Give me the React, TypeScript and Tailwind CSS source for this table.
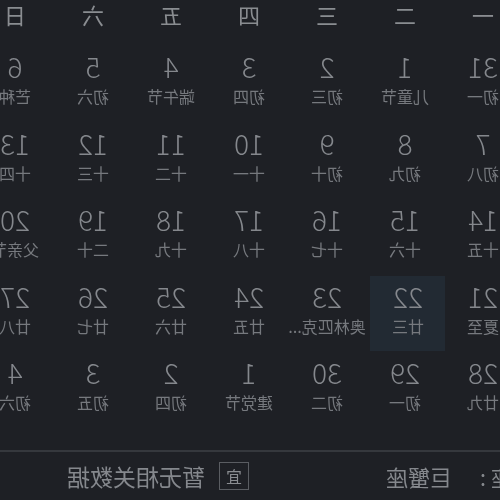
const weekdays = ["一", "二", "三", "四", "五", "六", "日"];

type Day = { n: number; sub: string; active?: boolean };

const weeks: Day[][] = [
  [
    { n: 31, sub: "初一" },
    { n: 1, sub: "儿童节" },
    { n: 2, sub: "初三" },
    { n: 3, sub: "初四" },
    { n: 4, sub: "端午节" },
    { n: 5, sub: "初六" },
    { n: 6, sub: "芒种" },
  ],
  [
    { n: 7, sub: "初八" },
    { n: 8, sub: "初九" },
    { n: 9, sub: "初十" },
    { n: 10, sub: "十一" },
    { n: 11, sub: "十二" },
    { n: 12, sub: "十三" },
    { n: 13, sub: "十四" },
  ],
  [
    { n: 14, sub: "十五" },
    { n: 15, sub: "十六" },
    { n: 16, sub: "十七" },
    { n: 17, sub: "十八" },
    { n: 18, sub: "十九" },
    { n: 19, sub: "二十" },
    { n: 20, sub: "父亲节" },
  ],
  [
    { n: 21, sub: "夏至" },
    { n: 22, sub: "廿三", active: true },
    { n: 23, sub: "奥林匹克日" },
    { n: 24, sub: "廿五" },
    { n: 25, sub: "廿六" },
    { n: 26, sub: "廿七" },
    { n: 27, sub: "廿八" },
  ],
  [
    { n: 28, sub: "廿九" },
    { n: 29, sub: "初一" },
    { n: 30, sub: "初二" },
    { n: 1, sub: "建党节" },
    { n: 2, sub: "初四" },
    { n: 3, sub: "初五" },
    { n: 4, sub: "初六" },
  ],
];

export default function App() {
  return (
    <div
      className="w-[500px] h-[500px] overflow-hidden bg-[#1e2025] text-[#878a8f]"
      style={{ fontFamily: '"Noto Sans CJK SC", "Noto Sans", sans-serif' }}
    >
      {/* whole view is mirrored left-right, as in the capture */}
      <div className="w-[500px] h-[500px] -scale-x-100 flex flex-col">
        <div className="-ml-[22px] w-[546px]">
          {/* weekday header */}
          <div className="grid grid-cols-7 h-[28px] items-center">
            {weekdays.map((w) => (
              <div key={w} className="text-center text-[22px] leading-[28px] text-[#8a8d91]">
                {w}
              </div>
            ))}
          </div>

          {/* days */}
          <div className="mt-[18px] flex flex-col">
            {weeks.map((week, i) => (
              <div key={i} className="grid grid-cols-7 h-[76.5px]">
                {week.map((d, j) => (
                  <div key={j} className="flex justify-center">
                    <div
                      className={`w-[75px] h-[75px] flex flex-col items-center ${
                        d.active ? "bg-[#222a33] translate-x-[-3px]" : ""
                      }`}
                    >
                      <div className="pt-[2px] h-[38px] text-[28px] leading-[36px] font-light text-[#85888d]">
                        {d.n}
                      </div>
                      <div className="h-[24px] max-w-[80px] text-[16px] leading-[24px] text-[#76797e] whitespace-nowrap">
                        {d.sub.length > 4 ? d.sub.slice(0, 4) + "..." : d.sub}
                      </div>
                    </div>
                  </div>
                ))}
              </div>
            ))}
          </div>
        </div>

        {/* divider */}
        <div className="mt-auto h-[2px] bg-[#35383d]" />

        {/* footer info */}
        <div className="h-[48px] flex items-center text-[22px] text-[#85888d]">
          <span className="-ml-[35px] w-[44px] whitespace-nowrap">星座</span>
          <span className="ml-[5px] w-[34px]">:</span>
          <span className="whitespace-nowrap">巨蟹座</span>
          <span className="ml-[137px] w-[30px] h-[28px] border border-[#5a5d62] flex items-center justify-center text-[16px] text-[#8a8d91]">
            宜
          </span>
          <span className="ml-[14px] text-[23px] whitespace-nowrap">暂无相关数据</span>
        </div>
      </div>
    </div>
  );
}
